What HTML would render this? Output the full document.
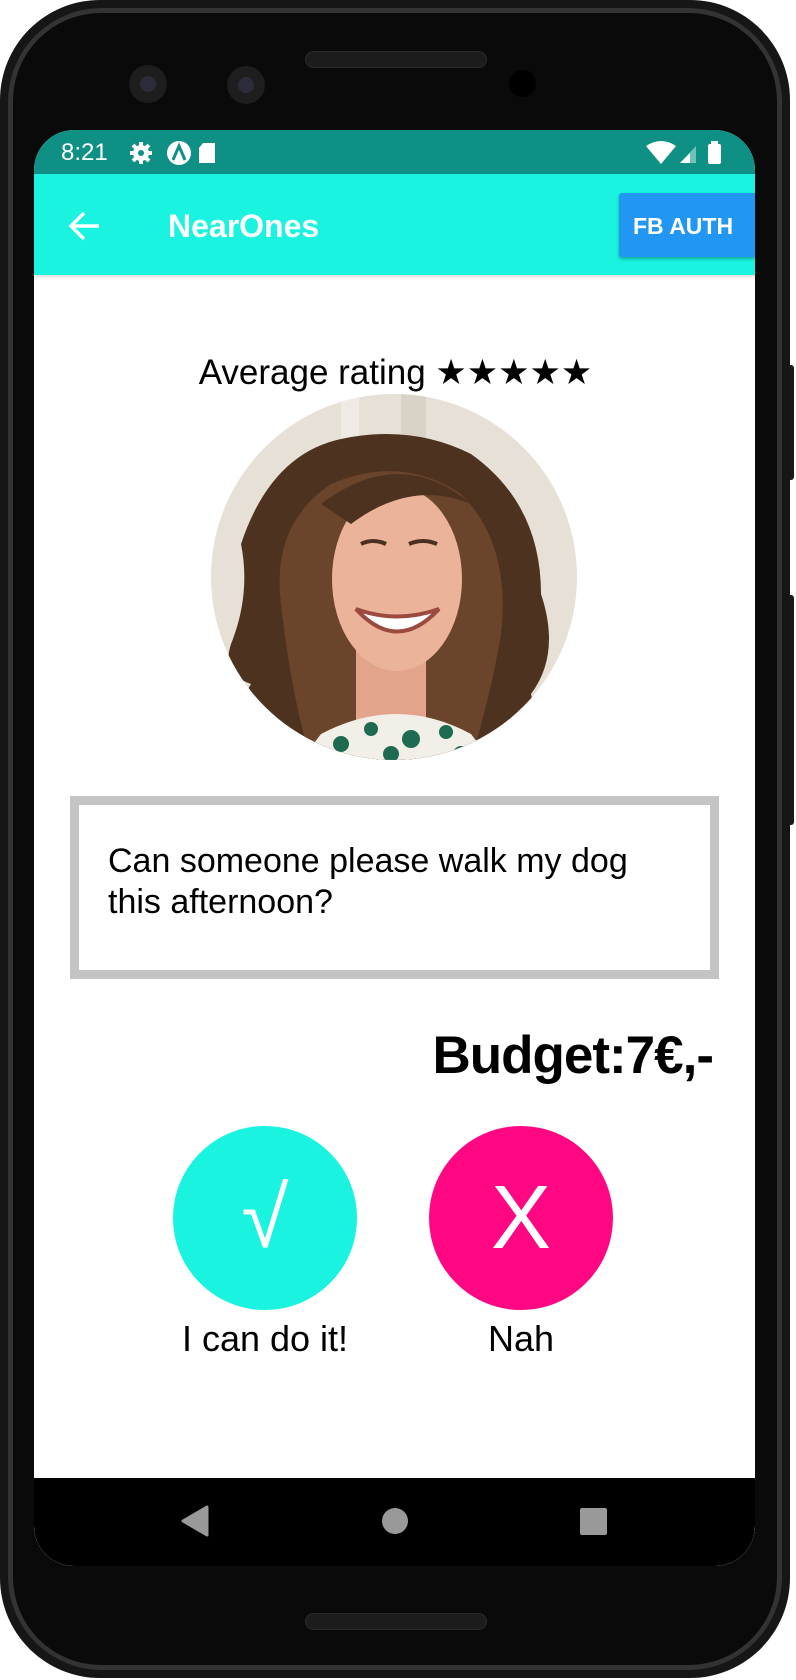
<!DOCTYPE html>
<html><head><meta charset="utf-8"><style>
*{margin:0;padding:0;box-sizing:border-box}
body{width:796px;height:1680px;background:#fff;position:relative;overflow:hidden;font-family:"Liberation Sans",Roboto,sans-serif}
.abs{position:absolute}
</style></head><body>
<div class="abs" style="left:782px;top:365px;width:12px;height:115px;background:#1a1a1a;border-radius:3px"></div>
<div class="abs" style="left:782px;top:595px;width:12px;height:230px;background:#1a1a1a;border-radius:3px"></div>
<div class="abs" style="left:0;top:0;width:790px;height:1678px;background:#161616;border-radius:100px"></div>
<div class="abs" style="left:8px;top:8px;width:774px;height:1662px;background:#333;border-radius:94px"></div>
<div class="abs" style="left:13px;top:13px;width:764px;height:1652px;background:#0a0a0a;border-radius:88px"></div>
<div class="abs" style="left:305px;top:51px;width:182px;height:17px;background:#1c1c1c;border-radius:9px;border:1px solid #2a2a2a"></div>
<div class="abs" style="left:305px;top:1613px;width:182px;height:17px;background:#1c1c1c;border-radius:9px;border:1px solid #2a2a2a"></div>
<div class="abs" style="left:129px;top:65px;width:38px;height:38px;background:#1e1e1e;border-radius:50%"><div style="margin:11px;width:16px;height:16px;border-radius:50%;background:#2c2c3a"></div></div>
<div class="abs" style="left:227px;top:66px;width:38px;height:38px;background:#1e1e1e;border-radius:50%"><div style="margin:11px;width:16px;height:16px;border-radius:50%;background:#2c2c3a"></div></div>
<div class="abs" style="left:509px;top:70px;width:27px;height:27px;background:#000;border-radius:50%"></div>
<div class="abs" style="left:34px;top:130px;width:721px;height:1436px;background:#fff;border-radius:40px;overflow:hidden">
  <div class="abs" style="left:0;top:0;width:721px;height:44px;background:#0f9085"></div>
  <div class="abs" style="left:27px;top:9px;color:#fff;font-size:24px">8:21</div>
  <svg class="abs" style="left:95px;top:10px" width="120" height="26" viewBox="0 0 120 26">
    <g fill="#fff">
      <circle cx="12" cy="13" r="8"/>
      <g stroke="#fff" stroke-width="4"><line x1="12" y1="2" x2="12" y2="24"/><line x1="1" y1="13" x2="23" y2="13"/><line x1="4" y1="5" x2="20" y2="21"/><line x1="20" y1="5" x2="4" y2="21"/></g>
      <circle cx="12" cy="13" r="3" fill="#0f9085"/>
      <circle cx="50" cy="13" r="12"/>
      <path d="M44 20 L50 6 L56 20" stroke="#0f9085" stroke-width="3" fill="none"/>
      <path d="M74 3 h12 v20 h-16 v-15 z"/>
    </g>
  </svg>
  <svg class="abs" style="left:610px;top:8px" width="100" height="30" viewBox="0 0 100 30">
    <path d="M2 8 Q17 -2 32 8 L17 26 Z" fill="#fff"/>
    <path d="M36 25 L52 8 L52 25 Z" fill="#6ec3b9"/><path d="M36 25 L46 15 L46 25 Z" fill="#fff"/>
    <rect x="64" y="6" width="13" height="20" rx="2" fill="#fff"/><rect x="67" y="3" width="7" height="4" fill="#fff"/>
  </svg>
  <div class="abs" style="left:0;top:44px;width:721px;height:101px;background:#19f3e0;box-shadow:0 2px 4px rgba(0,0,0,.15)"></div>
  <svg class="abs" style="left:34px;top:80px" width="34" height="32" viewBox="0 0 34 32"><path d="M31 16 H4 M16 3 L3 16 L16 29" stroke="#fff" stroke-width="3.5" fill="none"/></svg>
  <div class="abs" style="left:134px;top:78px;color:#fff;font-size:32px;font-weight:bold">NearOnes</div>
  <div class="abs" style="left:585px;top:63px;width:136px;height:64px;background:#2196f3;border-radius:3px 0 0 3px;box-shadow:0 2px 3px rgba(0,0,0,.3);color:#fff;font-weight:bold;font-size:23px;line-height:66px;padding-left:14px">FB AUTH</div>

  <div class="abs" style="left:0;top:223px;width:721px;text-align:center;font-size:35px;color:#000;padding-left:2px">Average rating ★★★★★</div>

  <svg class="abs" style="left:177px;top:264px" width="366" height="366" viewBox="0 0 366 366">
    <defs><clipPath id="c"><circle cx="183" cy="183" r="183"/></clipPath></defs>
    <g clip-path="url(#c)">
      <rect width="366" height="366" fill="#e6e0d6"/>
      <rect x="130" y="0" width="18" height="366" fill="#efebe4"/>
      <rect x="190" y="0" width="25" height="366" fill="#d9d2c6"/>
      <path d="M20 250 Q40 200 30 150 Q60 60 130 45 Q200 30 260 60 Q330 110 330 200 Q350 260 320 300 Q330 340 300 366 L60 366 Q20 320 40 290 Q10 280 20 250 Z" fill="#4e3220"/>
      <path d="M70 210 Q60 130 120 90 Q190 60 250 100 Q300 150 290 240 Q280 300 260 366 L100 366 Q80 300 70 210Z" fill="#6a452c"/>
      <rect x="145" y="250" width="70" height="90" fill="#e2a58c"/>
      <ellipse cx="186" cy="185" rx="65" ry="92" fill="#ebb49a"/>
      <path d="M110 110 Q190 50 260 110 Q200 85 140 130 Z" fill="#4e3220"/>
      <path d="M145 215 Q186 260 228 215 Q186 230 145 215Z" fill="#fff" stroke="#9c4a40" stroke-width="4"/>
      <path d="M150 150 Q162 144 175 150" stroke="#4a3020" stroke-width="4" fill="none"/>
      <path d="M198 150 Q212 144 226 150" stroke="#4a3020" stroke-width="4" fill="none"/>
      <path d="M110 340 Q186 300 260 340 L280 366 L90 366Z" fill="#f2efe8"/>
      <g fill="#1e6b52"><circle cx="130" cy="350" r="8"/><circle cx="160" cy="335" r="7"/><circle cx="200" cy="345" r="9"/><circle cx="235" cy="338" r="7"/><circle cx="180" cy="360" r="8"/><circle cx="250" cy="360" r="8"/></g>
    </g>
  </svg>

  <div class="abs" style="left:36px;top:666px;width:649px;height:183px;border:9px solid #c4c4c4"></div>
  <div class="abs" style="left:74px;top:711px;font-size:34px;line-height:41px;color:#000;width:600px">Can someone please walk my dog<br>this afternoon?</div>

  <div class="abs" style="right:42px;top:895px;font-size:53px;font-weight:bold;color:#000;letter-spacing:-1px">Budget:7€,-</div>

  <div class="abs" style="left:139px;top:996px;width:184px;height:184px;border-radius:50%;background:#19f3e0;color:#fff;font-size:86px;text-align:center;line-height:184px">√</div>
  <div class="abs" style="left:395px;top:996px;width:184px;height:184px;border-radius:50%;background:#ff0682;color:#fff;font-size:90px;text-align:center;line-height:184px">X</div>
  <div class="abs" style="left:81px;top:1188px;width:300px;text-align:center;font-size:36px;color:#000">I can do it!</div>
  <div class="abs" style="left:337px;top:1188px;width:300px;text-align:center;font-size:36px;color:#000">Nah</div>

  <div class="abs" style="left:0;top:1348px;width:721px;height:88px;background:#000;border-radius:0 0 40px 40px"></div>
  <svg class="abs" style="left:0;top:1348px" width="721" height="88">
    <path d="M173 29 L173 57 L149 43 Z" fill="#999" stroke="#999" stroke-width="3" stroke-linejoin="round"/>
    <circle cx="361" cy="43" r="13" fill="#999"/>
    <rect x="546" y="30" width="27" height="27" rx="2" fill="#999"/>
  </svg>
</div>
</body></html>
